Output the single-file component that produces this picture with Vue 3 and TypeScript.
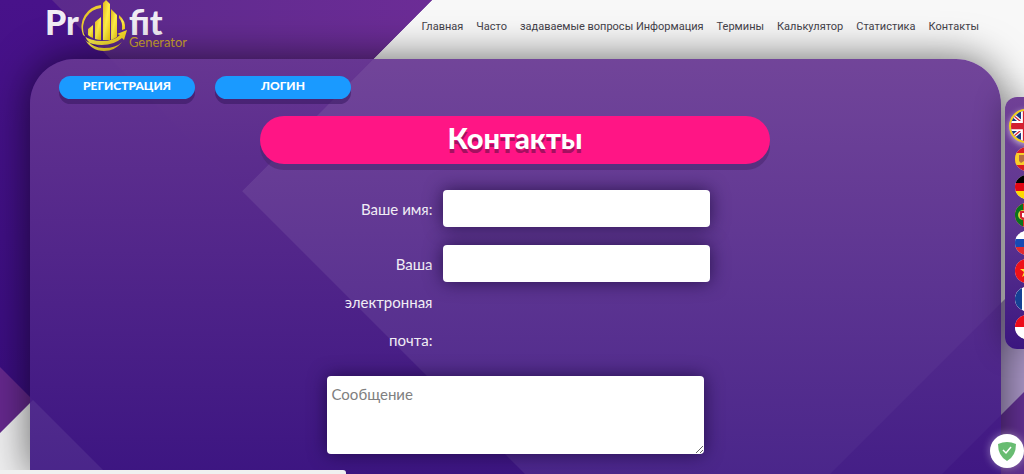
<script setup lang="ts">
import { ref } from 'vue'

interface NavItem { label: string; href: string }

const nav: NavItem[] = [
  { label: 'Главная', href: '#home' },
  { label: 'Часто', href: '#faq' },
  { label: 'задаваемые вопросы Информация', href: '#info' },
  { label: 'Термины', href: '#terms' },
  { label: 'Калькулятор', href: '#calculator' },
  { label: 'Статистика', href: '#stats' },
  { label: 'Контакты', href: '#contacts' },
]
const languages = ['gb', 'es', 'de', 'pt', 'ru', 'vn', 'fr', 'id']
const name = ref('')
const email = ref('')
const message = ref('')
</script>

<template>
  <div class="page">
    <svg class="backdrop" viewBox="0 0 1024 474" preserveAspectRatio="none" aria-hidden="true">
      <defs>
        <linearGradient id="base" x1="0" y1="0" x2="0" y2="1">
          <stop offset="0" stop-color="#48128a" />
          <stop offset="1" stop-color="#360c7c" />
        </linearGradient>
        <linearGradient id="wedge" x1="0" y1="0" x2="1" y2="0">
          <stop offset="0" stop-color="#5b2a8c" />
          <stop offset="1" stop-color="#6c2c96" />
        </linearGradient>
        <linearGradient id="fade" x1="0" y1="0" x2="0" y2="1">
          <stop offset=".3" stop-color="#42107f" stop-opacity="0" />
          <stop offset=".8" stop-color="#42107f" />
        </linearGradient>
      </defs>
      <rect width="1024" height="474" fill="url(#base)" />
      <path d="M432 0H1024V474H525L242 191Z" fill="#f8f8f8" />
      <path d="M52 0H432L242 191Z" fill="url(#wedge)" />
      <path d="M52 0H432L242 191Z" fill="url(#fade)" />
      <path d="M1024 280V474H830Z" fill="#a996c6" />
      <path d="M1024 392V474H942Z" fill="#623093" />
      <path d="M0 367L33 400L0 433Z" fill="#65288d" />
      <path d="M0 433L33 400L107 474H0Z" fill="#efeff0" />
    </svg>

    <header class="header">
      <a class="logo" href="#home" aria-label="Profit Generator">
        <span class="word">Pr</span>
        <svg class="emblem" viewBox="0 0 48 52" aria-hidden="true">
          <defs>
            <linearGradient id="gold" x1="0" y1="0" x2="1" y2="1">
              <stop offset="0" stop-color="#e0b51c" />
              <stop offset=".5" stop-color="#fff04a" />
              <stop offset="1" stop-color="#f4ca09" />
            </linearGradient>
          </defs>
          <g fill="url(#gold)">
            <path d="M21 5A22 22 0 0 0 3 35Q10 41 22 41Q34 41 40 35L37 34L47 30L44 40L42 38Q34 45 22 45Q12 45 6 41L4 38Q11 51 24 51Q35 51 42 42Q36 48 24 48Q13 48 7 40L4 34A20 20 0 0 1 21 8Z" />
            <path d="M39 15Q46 21 45 29L42 30Q43 22 39 18Z" />
            <path d="M8 29L13 25V38Q10 37 8 35Z" />
            <path d="M15 22L21 17V40Q18 40 15 39Z" />
            <path d="M23 3L26 0L30 4V40H23Z" />
            <path d="M31 9L33 11L37 15V37Q34 39 31 40Z" />
          </g>
        </svg>
        <span class="tail"><span class="word">fit</span><span class="sub">Generator</span></span>
      </a>
      <nav class="nav" aria-label="Меню">
        <a v-for="item in nav" :key="item.href" :href="item.href">{{ item.label }}</a>
      </nav>
    </header>

    <main class="panel">
      <div class="actions">
        <button type="button">РЕГИСТРАЦИЯ</button>
        <button type="button">ЛОГИН</button>
      </div>
      <h1>Контакты</h1>
      <form @submit.prevent>
        <div class="row">
          <label for="name">Ваше имя:</label>
          <input id="name" v-model="name" type="text" />
        </div>
        <div class="row">
          <label for="email">Ваша электронная почта:</label>
          <input id="email" v-model="email" type="email" />
        </div>
        <textarea v-model="message" aria-label="Сообщение" placeholder="Сообщение"></textarea>
      </form>
    </main>

    <aside class="languages" aria-label="Язык">
      <button v-for="code in languages" :key="code" type="button" :class="{ current: code === 'gb' }" :aria-label="code">
        <svg viewBox="0 0 24 24" aria-hidden="true">
          <g v-if="code === 'gb'">
            <path fill="#173a80" d="M0 0H24V24H0Z" />
            <path stroke="#fff" stroke-width="3" d="M0 2L24 22M24 2L0 22" />
            <path stroke="#d32030" stroke-width="1" d="M0 2L24 22M24 2L0 22" />
            <path stroke="#fff" stroke-width="8" d="M12 0V24M0 12H24" />
            <path stroke="#d32030" stroke-width="5" d="M12 0V24M0 12H24" />
          </g>
          <g v-else-if="code === 'es'">
            <path fill="#d91c25" d="M0 0H24V24H0Z" />
            <path fill="#f9cf29" d="M0 6H24V18H0Z" />
            <path fill="#b66c45" d="M4 8H9V14L6 16L4 14Z" />
          </g>
          <g v-else-if="code === 'de'">
            <path fill="#000" d="M0 0H24V8H0Z" />
            <path fill="#e10613" d="M0 8H24V16H0Z" />
            <path fill="#ffda00" d="M0 16H24V24H0Z" />
          </g>
          <g v-else-if="code === 'pt'">
            <path fill="#e22b1c" d="M0 0H24V24H0Z" />
            <path fill="#08731e" d="M0 0H8V24H0Z" />
            <circle cx="8" cy="12" r="5" fill="#d8c83c" />
            <path fill="#fff" stroke="#d32030" stroke-width="2" d="M6 9H11V14L8 16L6 14Z" />
          </g>
          <g v-else-if="code === 'ru'">
            <path fill="#fff" d="M0 0H24V8H0Z" />
            <path fill="#1749b3" d="M0 8H24V16H0Z" />
            <path fill="#e12a2e" d="M0 16H24V24H0Z" />
          </g>
          <g v-else-if="code === 'vn'">
            <path fill="#ee1118" d="M0 0H24V24H0Z" />
            <path fill="#ffe62e" d="M12 6L14 10H19L15 13L17 18L12 15L7 18L9 13L5 10H10Z" />
          </g>
          <g v-else-if="code === 'fr'">
            <path fill="#fff" d="M0 0H24V24H0Z" />
            <path fill="#164194" d="M0 0H7V24H0Z" />
            <path fill="#e30613" d="M17 0H24V24H17Z" />
          </g>
          <g v-else>
            <path fill="#ec0b18" d="M0 0H24V12H0Z" />
            <path fill="#fff" d="M0 12H24V24H0Z" />
          </g>
        </svg>
      </button>
    </aside>

    <button class="shield" type="button" aria-label="Защита">
      <svg viewBox="0 0 34 34" aria-hidden="true">
        <path fill="#68bc71" d="M8 10Q17 6 26 10Q26 22 17 27Q8 22 8 10Z" />
        <path fill="none" stroke="#fff" stroke-width="1.5" d="M13 16L16 19L21 13" />
      </svg>
    </button>
    <div class="status"></div>
  </div>
</template>

<style>
html, body { margin: 0; overflow: hidden; }
</style>

<style scoped>
.page {
  position: relative;
  min-height: 100vh;
  display: flex;
  flex-direction: column;
  font-family: Lato, "Noto Sans", sans-serif;
  isolation: isolate;
}
.backdrop { position: absolute; inset: 0; width: 100%; height: 100%; z-index: -1; }
.header {
  height: 59px;
  display: flex;
  justify-content: space-between;
  align-items: flex-start;
  padding: 0 45px;
  box-sizing: border-box;
}
.logo { display: flex; gap: 1px; text-decoration: none; color: #f1edf5; }
.word { font-size: 34px; line-height: 26px; font-weight: 900; padding-top: 9px; }
.emblem { width: 48px; height: 52px; }
.tail { display: flex; flex-direction: column; }
.sub { font-size: 13px; line-height: 14px; color: #d0a52e; }
.nav { display: flex; gap: 13px; padding-top: 19px; white-space: nowrap; }
.nav a { font: 11px/16px Roboto, "Noto Sans", sans-serif; color: #44424a; text-decoration: none; }
.panel {
  flex: 1;
  margin: 0 23px 0 30px;
  padding: 17px 30px 20px 29px;
  box-sizing: border-box;
  border-radius: 45px 45px 0 0;
  background: linear-gradient(rgba(103, 55, 146, .93), rgba(61, 22, 130, .93));
  box-shadow: 0 0 40px rgba(0, 0, 0, .6);
}
.actions { display: flex; gap: 20px; }
.actions button {
  width: 136px;
  height: 23px;
  border: 0;
  border-radius: 12px;
  padding: 0 0 3px;
  background: #1a9aff;
  color: #fff;
  font: 900 12px/20px Lato, sans-serif;
  box-shadow: 0 5px 0 rgba(50, 20, 90, .5);
}
h1 {
  width: 56%;
  height: 48px;
  margin: 17px auto 26px;
  border-radius: 24px;
  background: #ff1585;
  color: #fff;
  text-align: center;
  font-size: 29px;
  line-height: 44px;
  font-weight: 900;
  text-shadow: 0 4px 0 #a51060;
  box-shadow: 0 6px 0 rgba(70, 35, 105, .5);
}
form { width: 377px; margin: 0 auto; display: flex; flex-direction: column; }
.row { display: flex; justify-content: flex-end; align-items: flex-start; gap: 10px; margin-right: -6px; margin-bottom: 17px; }
label { width: 100px; color: #f1edf5; font-size: 15px; line-height: 38px; text-align: right; }
input, textarea {
  box-sizing: border-box;
  border: 0;
  border-radius: 4px;
  background: #fff;
  font: 15px/20px Lato, sans-serif;
  box-shadow: 0 0 18px rgba(20, 5, 50, .7);
}
input { width: 267px; height: 37px; padding: 0 8px; }
textarea { width: 100%; height: 78px; padding: 8px 5px; }
textarea::placeholder { color: #808080; }
.languages {
  position: fixed;
  top: 97px;
  right: 0;
  width: 19px;
  height: 252px;
  box-sizing: border-box;
  padding: 12px 0 0 10px;
  border-radius: 12px 0 0 12px;
  background: linear-gradient(#704096, #5d3592 50%, #3b167f);
  box-shadow: 0 0 30px rgba(0, 0, 0, .4);
  overflow: hidden;
}
.languages button { display: block; width: 24px; height: 24px; padding: 0; margin: 0 0 4px; border: 0; border-radius: 50%; overflow: hidden; }
.languages svg { display: block; width: 100%; height: 100%; }
.languages .current { width: 34px; height: 34px; margin: 0 0 4px -6px; border: 2px solid #f2ce1d; box-sizing: border-box; box-shadow: 0 2px 6px rgba(255, 255, 255, .6); }
.shield { position: fixed; right: 0; bottom: 6px; width: 34px; height: 34px; padding: 0; border: 0; border-radius: 50%; background: #fff; box-shadow: 0 0 8px rgba(255, 255, 255, .4); }
.shield svg { display: block; width: 34px; height: 34px; }
.status { position: fixed; left: 0; bottom: 0; width: 346px; height: 4px; border-radius: 0 3px 0 0; background: #f0f0f0; }
</style>
